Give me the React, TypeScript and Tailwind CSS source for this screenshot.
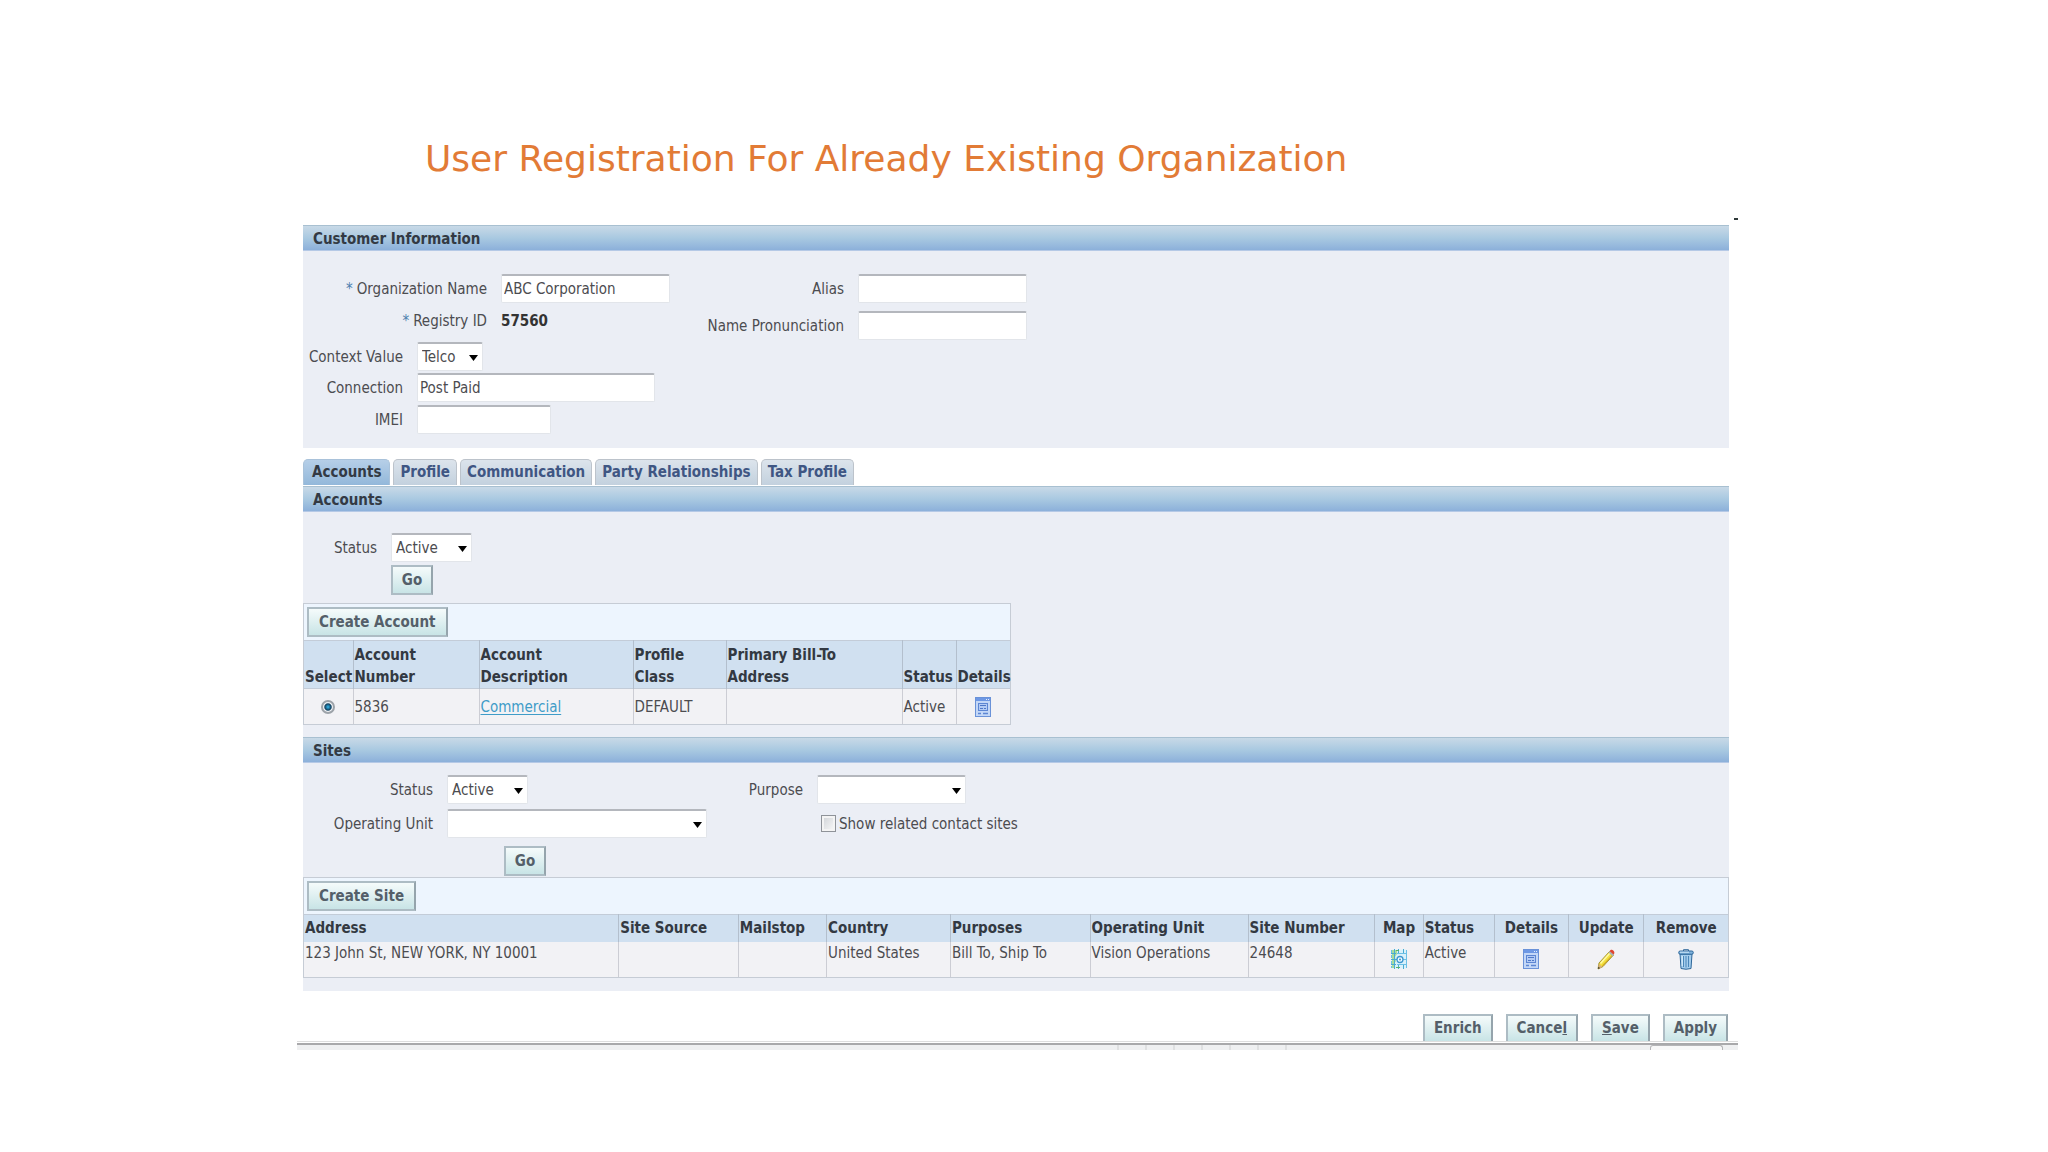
import { ReactNode } from "react";
import clsx from "clsx";

const tabs = ["Accounts", "Profile", "Communication", "Party Relationships", "Tax Profile"];

const siteColumns = [
  { label: "Address", width: "w-[22.1%]" },
  { label: "Site Source", width: "w-[8.4%]" },
  { label: "Mailstop", width: "w-[6.2%]" },
  { label: "Country", width: "w-[8.7%]" },
  { label: "Purposes", width: "w-[9.8%]" },
  { label: "Operating Unit", width: "w-[11.1%]" },
  { label: "Site Number", width: "w-[8.9%]" },
  { label: "Map", width: "w-[3.4%]", center: true },
  { label: "Status", width: "w-[5%]" },
  { label: "Details", width: "w-[5.2%]", center: true },
  { label: "Update", width: "w-[5.3%]", center: true },
  { label: "Remove", width: "w-[5.9%]", center: true },
];

const fieldClass =
  "h-[29px] rounded-[2px] border border-t-2 border-[#e2e5ea] border-t-[#b4b7bd] bg-white text-[15px] text-[#4c4c50] outline-none";
const thClass = "border-r border-[#b3bfcd] px-px leading-[22px] font-bold whitespace-nowrap text-[#333942]";
const tdClass = "border-r border-[#cccdd4] px-px whitespace-nowrap";
const iconButtonClass = "flex h-[35px] w-full items-center justify-center";

function DetailsIcon() {
  return (
    <svg width="16" height="20" viewBox="0 0 16 20" className="inline-block">
      <rect x="0.5" y="0.5" width="15" height="19" fill="#c3d7f7" stroke="#6a92d8" />
      <rect x="1" y="1" width="14" height="3" fill="#6e98e4" />
      <path d="M11 2.5h1M13 2.5h1" stroke="#e4eefc" />
      <rect x="3.5" y="6.5" width="9" height="7" fill="#b3cbf5" stroke="#5d86d3" />
      <path d="M5 8.500h6M5 11.500h3M9 11.500h2" stroke="#4f79c8" />
      <path d="M3 16.500h3M8 16.500h5" stroke="#5d86d3" strokeWidth="1.500" />
    </svg>
  );
}

function MapIcon() {
  return (
    <svg width="16" height="20" viewBox="0 0 16 20" className="inline-block">
      <rect x="0.5" y="0.5" width="15" height="19" rx="1" fill="#d9f1fb" />
      <path d="M1 1h5v4l-2 3 1 4-2 3 1 4H1z" fill="#a8dc9c" />
      <path d="M3.5 0v20M0 4.5h5M0 10.5h6M0 15.5h5M7.5 0v5M12.5 0v5M7.5 15v5M12.5 15v5" stroke="#4aabd0" />
      <path d="M6 4.500h9.500v11H6M12 10.500h4M0.500 1v3M0.500 6v3M0.500 12v3M0.500 17v2M15.500 1v18" fill="none" stroke="#6cc0e6" />
      <circle cx="9" cy="10.500" r="3" fill="#f1fbff" stroke="#3d97d0" strokeWidth="1.300" />
      <circle cx="9" cy="10.500" r="1" fill="#3d97d0" />
      <path d="M5 1.500h3M5 18.500h4" stroke="#57b36b" />
    </svg>
  );
}

function PencilIcon() {
  return (
    <svg width="18" height="21" viewBox="0 0 18 21" className="inline-block">
      <path d="M1 20l1-6L12.500 2.500l4 3.500L6 17.500z" fill="#f4e13c" stroke="#9b8a2a" strokeWidth="0.900" />
      <path d="M3.500 14.500L13 4" stroke="#fff9a6" strokeWidth="1.500" />
      <path d="M5.500 16.800L15.500 6" stroke="#d0a92a" strokeWidth="1.100" />
      <path d="M11.500 3.500l1.500-1.500 4 3.500-1.500 1.700z" fill="#a9b3b8" />
      <path d="M12.700 2.200C13.500 0.500 15 0.300 16.300 1.400s1.500 2.800 0.300 4.200z" fill="#e0452f" />
      <path d="M1 20l0.800-5 3.700 2.800z" fill="#d9b37a" />
      <path d="M1 20l0.300-2.300 1.800 1.300z" fill="#3b3626" />
    </svg>
  );
}

function TrashIcon() {
  return (
    <svg width="16" height="21" viewBox="0 0 16 21" className="inline-block">
      <path d="M2 5h12l-1 14.500q-5 1.500-10 0z" fill="#a4cded" stroke="#2e6799" />
      <path d="M5.500 7v11M8 7v11.500M10.500 7v11" stroke="#4a86b8" />
      <path d="M4.200 7v10" stroke="#e3f3fd" />
      <path d="M5.500 2V0.700h5V2" fill="none" stroke="#2e6799" />
      <rect x="0.700" y="2" width="14.600" height="3.200" rx="1.500" fill="#7fb2dc" stroke="#2e6799" />
      <path d="M2 3.200h9" stroke="#d3e9f8" />
    </svg>
  );
}

function BarTitle({ children }: { children: ReactNode }) {
  return (
    <h2 className="h-[26px] border-t border-b border-t-[#a8c0d1] border-b-[#b5c9e6] bg-linear-to-b from-[#c8d9e7] via-[#a9c9e1] to-[#8cb0da] pl-[10px] text-[15px] leading-[26px] font-bold text-[#333a44]">
      {children}
    </h2>
  );
}

function PushButton({ className, children }: { className?: string; children: ReactNode }) {
  return (
    <button
      type="button"
      className={clsx(
        "border-2 border-[#adbcc4] border-r-[#95a4ac] bg-linear-to-b from-[#f5fbfb] to-[#c8e4e6] text-[15px] leading-[20px] font-bold whitespace-nowrap text-[#545f69]",
        className
      )}
    >
      {children}
    </button>
  );
}

function Label({ htmlFor, className, children }: { htmlFor: string; className: string; children: ReactNode }) {
  return (
    <label htmlFor={htmlFor} className={clsx("shrink-0 text-right whitespace-nowrap", className)}>
      {children}
    </label>
  );
}

function Required() {
  return <span className="mr-1 text-[#4d7fae]">*</span>;
}

function Select({ id, value, className }: { id: string; value: string; className: string }) {
  return (
    <div className={clsx("relative", className)}>
      <select id={id} className={clsx(fieldClass, "block w-full appearance-none pl-[4px]")} defaultValue={value}>
        <option value={value}>{value}</option>
      </select>
      <svg width="9" height="6" viewBox="0 0 9 6" className="pointer-events-none absolute top-[13px] right-[5px]">
        <path d="M0 0h9L4.500 6z" fill="#000" />
      </svg>
    </div>
  );
}

function CustomerInformation() {
  return (
    <section className="bg-[#ebeef5]">
      <BarTitle>Customer Information</BarTitle>
      <div className="flex pt-[23px] pb-[14px]">
        <div className="w-[391px] shrink-0">
          <div className="flex items-center gap-[14px]">
            <Label htmlFor="org-name" className="w-[184px]"><Required />Organization Name</Label>
            <input id="org-name" type="text" defaultValue="ABC Corporation" className={clsx(fieldClass, "w-[169px] px-[2px]")} />
          </div>
          <div className="mb-[3px] flex h-[36px] items-center gap-[14px]">
            <span className="w-[184px] text-right"><Required />Registry ID</span>
            <span className="font-bold text-[#333]">57560</span>
          </div>
          <div className="flex items-center gap-[14px]">
            <Label htmlFor="context" className="w-[100px]">Context Value</Label>
            <Select id="context" value="Telco" className="w-[66px]" />
          </div>
          <div className="mt-[2px] flex items-center gap-[14px]">
            <Label htmlFor="connection" className="w-[100px]">Connection</Label>
            <input id="connection" type="text" defaultValue="Post Paid" className={clsx(fieldClass, "w-[238px] px-[2px]")} />
          </div>
          <div className="mt-[3px] flex items-center gap-[14px]">
            <Label htmlFor="imei" className="w-[100px]">IMEI</Label>
            <input id="imei" type="text" className={clsx(fieldClass, "w-[134px] px-[2px]")} />
          </div>
        </div>
        <div>
          <div className="flex items-center gap-[14px]">
            <Label htmlFor="alias" className="w-[150px]">Alias</Label>
            <input id="alias" type="text" className={clsx(fieldClass, "w-[169px] px-[2px]")} />
          </div>
          <div className="mt-[8px] flex items-center gap-[14px]">
            <Label htmlFor="pronunciation" className="w-[150px]">Name Pronunciation</Label>
            <input id="pronunciation" type="text" className={clsx(fieldClass, "w-[169px] px-[2px]")} />
          </div>
        </div>
      </div>
    </section>
  );
}

function Accounts() {
  return (
    <section className="bg-[#ebeef5] pb-[12px]">
      <BarTitle>Accounts</BarTitle>
      <div className="flex items-center gap-[14px] pt-[21px]">
        <Label htmlFor="account-status" className="w-[74px]">Status</Label>
        <Select id="account-status" value="Active" className="w-[81px]" />
      </div>
      <PushButton className="mt-[3px] mb-[8px] ml-[88px] block h-[30px] w-[42px]">Go</PushButton>

      <div className="w-[708px] border border-[#c6ccd5]">
        <div className="flex h-[36px] items-center bg-[#edf5fe] pl-[3px]">
          <PushButton className="h-[30px] px-[10px]">Create Account</PushButton>
        </div>
        <table className="w-full table-fixed border-collapse text-left">
          <thead>
            <tr className="h-[48px] border-y border-[#c3ccd8] bg-[#d0e0f0] align-bottom">
              <th className={clsx(thClass, "w-[49px]")}>Select</th>
              <th className={clsx(thClass, "w-[126px]")}>Account<br />Number</th>
              <th className={clsx(thClass, "w-[154px]")}>Account<br />Description</th>
              <th className={clsx(thClass, "w-[93px]")}>Profile<br />Class</th>
              <th className={clsx(thClass, "w-[176px]")}>Primary Bill-To<br />Address</th>
              <th className={clsx(thClass, "w-[54px]")}>Status</th>
              <th className={clsx(thClass, "border-r-0")}>Details</th>
            </tr>
          </thead>
          <tbody>
            <tr className="h-[35px] bg-[#f2f2f5]">
              <td className={clsx(tdClass, "text-center")}>
                <input
                  type="radio"
                  name="account"
                  aria-label="Select account 5836"
                  defaultChecked
                  className="size-[14px] appearance-none rounded-full border-2 border-[#9da3a9] bg-[radial-gradient(circle,#2a9fd0_0_10%,#12405e_45%,#eef2f5_60%)] align-middle"
                />
              </td>
              <td className={tdClass}>5836</td>
              <td className={tdClass}>
                <a href="#commercial" className="text-[#3f9cc8] underline underline-offset-2">Commercial</a>
              </td>
              <td className={tdClass}>DEFAULT</td>
              <td className={tdClass}></td>
              <td className={tdClass}>Active</td>
              <td>
                <button type="button" aria-label="Account details" className={iconButtonClass}><DetailsIcon /></button>
              </td>
            </tr>
          </tbody>
        </table>
      </div>
    </section>
  );
}

function Sites() {
  return (
    <section className="bg-[#ebeef5] pb-[13px]">
      <BarTitle>Sites</BarTitle>
      <div className="flex pt-[12px]">
        <div className="w-[405px] shrink-0">
          <div className="flex items-center gap-[14px]">
            <Label htmlFor="site-status" className="w-[130px]">Status</Label>
            <Select id="site-status" value="Active" className="w-[81px]" />
          </div>
          <div className="mt-[5px] flex items-center gap-[14px]">
            <Label htmlFor="operating-unit" className="w-[130px]">Operating Unit</Label>
            <Select id="operating-unit" value="" className="w-[260px]" />
          </div>
        </div>
        <div>
          <div className="flex items-center gap-[14px]">
            <Label htmlFor="purpose" className="w-[95px]">Purpose</Label>
            <Select id="purpose" value="" className="w-[149px]" />
          </div>
          <div className="mt-[5px] ml-[113px] flex h-[29px] items-center gap-[3px]">
            <input
              id="related"
              type="checkbox"
              className="h-[17px] w-[15px] appearance-none border border-[#8f9399] bg-linear-to-br from-[#cfd2d6] to-[#fafafa] ring-2 ring-[#f4f4f4] ring-inset"
            />
            <label htmlFor="related" className="whitespace-nowrap">Show related contact sites</label>
          </div>
        </div>
      </div>
      <PushButton className="mt-[8px] mb-px ml-[201px] block h-[30px] w-[42px]">Go</PushButton>

      <div className="border border-[#c6ccd5]">
        <div className="flex h-[36px] items-center bg-[#edf5fe] pl-[3px]">
          <PushButton className="h-[30px] px-[10px]">Create Site</PushButton>
        </div>
        <table className="w-full table-fixed border-collapse text-left">
          <thead>
            <tr className="h-[27px] border-t border-[#c3ccd8] bg-[#d0e0f0]">
              {siteColumns.map(({ label, width, center }) => (
                <th key={label} className={clsx(thClass, width, center && "text-center", "last:border-r-0")}>
                  {label}
                </th>
              ))}
            </tr>
          </thead>
          <tbody>
            <tr className="h-[35px] bg-[#f2f2f5] align-top">
              <td className={tdClass}>123 John St, NEW YORK, NY 10001</td>
              <td className={tdClass}></td>
              <td className={tdClass}></td>
              <td className={tdClass}>United States</td>
              <td className={tdClass}>Bill To, Ship To</td>
              <td className={tdClass}>Vision Operations</td>
              <td className={tdClass}>24648</td>
              <td className={tdClass}>
                <button type="button" aria-label="Map" className={iconButtonClass}><MapIcon /></button>
              </td>
              <td className={tdClass}>Active</td>
              <td className={tdClass}>
                <button type="button" aria-label="Site details" className={iconButtonClass}><DetailsIcon /></button>
              </td>
              <td className={tdClass}>
                <button type="button" aria-label="Update" className={iconButtonClass}><PencilIcon /></button>
              </td>
              <td>
                <button type="button" aria-label="Remove" className={iconButtonClass}><TrashIcon /></button>
              </td>
            </tr>
          </tbody>
        </table>
      </div>
    </section>
  );
}

export default function App() {
  return (
    <main className="min-h-screen bg-white pt-[138px] pr-[310px] pl-[297px] font-['DejaVu_Sans_Condensed','DejaVu_Sans',sans-serif] text-[15px] leading-[22px] text-[#4c4c50]">
      <h1 className="pl-[128px] font-['DejaVu_Sans',Verdana,sans-serif] text-[36px] leading-[42px] whitespace-nowrap text-[#e27b36]">
        User Registration For Already Existing Organization
      </h1>
      <div className="mt-[38px] mb-[5px] ml-auto h-[2px] w-[4px] bg-[#2f3a3a]" />

      <div className="pr-[9px] pl-[6px]">
        <CustomerInformation />

        <nav className="mt-[11px] mb-px flex gap-[3px]">
          {tabs.map((tab, i) => (
            <a
              key={tab}
              href={`#${tab.toLowerCase().replace(" ", "-")}`}
              className={clsx(
                "h-[26px] rounded-t-[5px] border border-b-0 leading-[24px] font-bold whitespace-nowrap",
                i === 0
                  ? "border-[#a9c2da] bg-linear-to-b from-[#b6cfe8] to-[#93b8da] px-[8px] text-[#333a44]"
                  : "border-[#bcc3cb] bg-linear-to-b from-[#dce4ec] to-[#c3d1de] px-[6px] text-[#3f5683]"
              )}
            >
              {tab}
            </a>
          ))}
        </nav>

        <Accounts />
        <Sites />

        <div className="mt-[23px] mr-px flex justify-end gap-[13px]">
          <PushButton className="h-[27px] border-b-0 px-[9px]">Enrich</PushButton>
          <PushButton className="h-[27px] border-b-0 px-[9px]">Cance<u>l</u></PushButton>
          <PushButton className="h-[27px] border-b-0 px-[9px]"><u>S</u>ave</PushButton>
          <PushButton className="h-[27px] border-b-0 px-[9px]">Apply</PushButton>
        </div>
      </div>

      <div className="h-[4px] border-t border-b-2 border-t-[#dedede] border-b-[#a9a9ab] bg-white" />
      <div className="flex h-[5px] bg-[#eff0f1] pl-[820px]">
        {Array.from({ length: 7 }, (_, i) => (
          <div key={i} className="w-[28px] border-l-2 border-[#dfe0e1]" />
        ))}
        <div className="mr-[15px] ml-auto w-[73px] rounded-t-[3px] border border-b-0 border-[#b5b5b7] bg-[#f8f8f8]" />
      </div>
    </main>
  );
}
